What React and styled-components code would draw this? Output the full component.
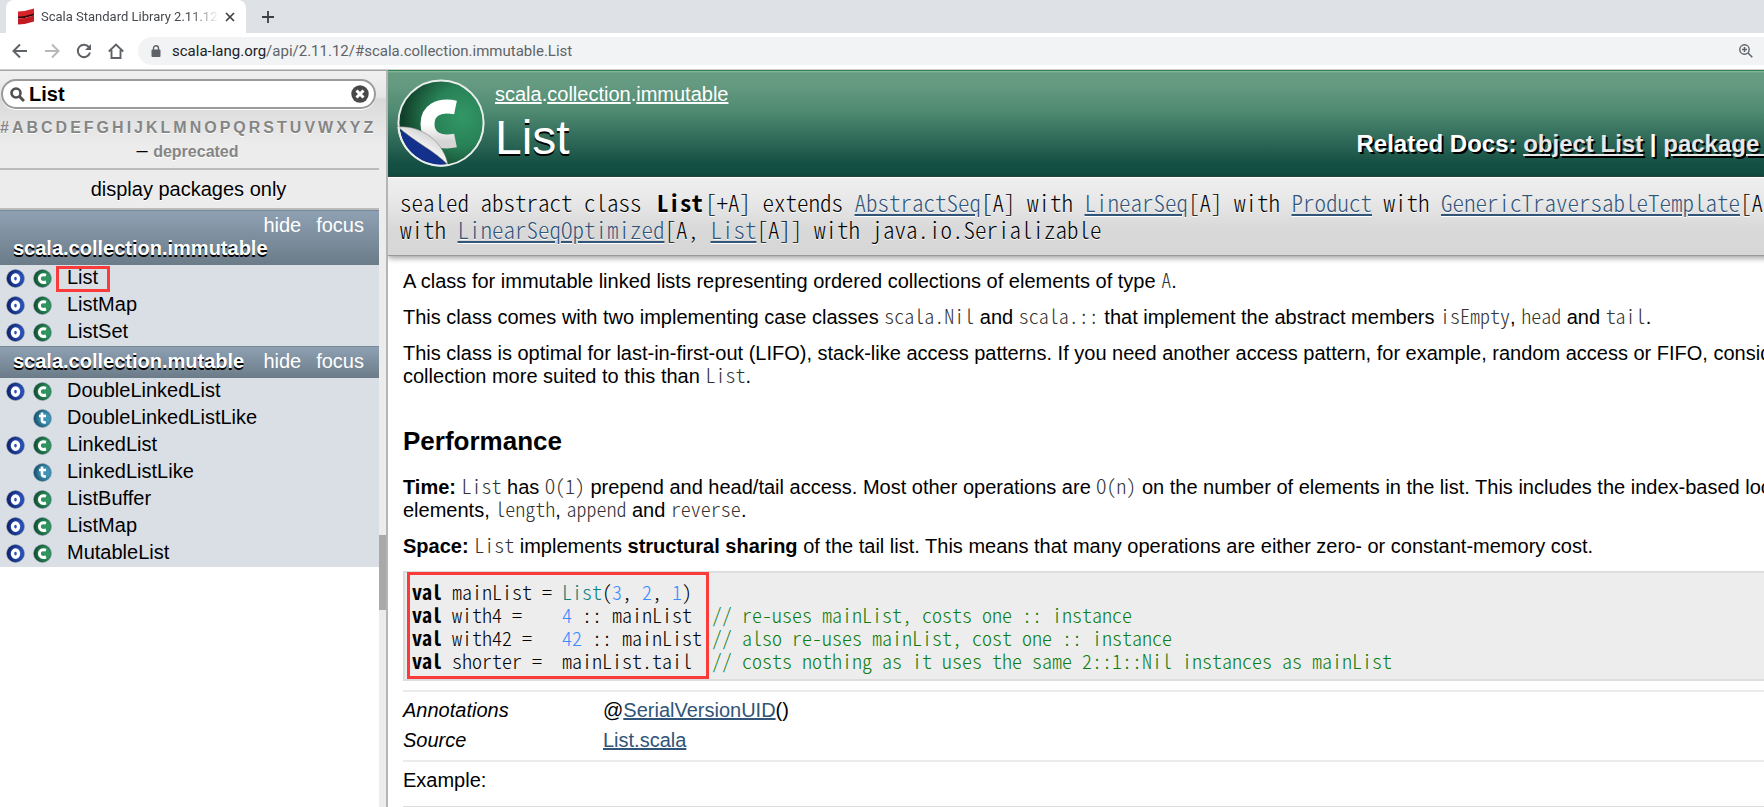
import React from 'react'
import styled, { createGlobalStyle } from 'styled-components'

const GlobalStyle = createGlobalStyle`
    *{
        box-sizing: border-box;
    }
    body{
        margin: 0;
        background-color: #ffffff;
        color: #000000;
        font-family: "Liberation Sans", Arial, sans-serif;
        font-size: 20px;
        overflow: hidden;
    }
    a{
        color: inherit;
    }
    button{
        border: 0;
        padding: 0;
        background: none;
        font: inherit;
        color: inherit;
    }
`

const mono = '"Noto Sans CJK SC", "Liberation Mono", monospace'

/* browser */
const Page = styled.div`
    display: flex;
    flex-direction: column;
    height: 100vh;
    overflow: hidden;
`
const TabBar = styled.div`
    display: flex;
    align-items: flex-end;
    height: 33px;
    background-color: #dee1e6;
`
const Tab = styled.div`
    display: flex;
    align-items: center;
    width: 240px;
    height: 33px;
    margin-left: 6px;
    padding: 0 11px;
    border-radius: 8px 8px 0 0;
    background-color: #ffffff;
`
const TabTitle = styled.span`
    flex: 1;
    margin: 0 6px;
    white-space: nowrap;
    font-family: Roboto, sans-serif;
    font-size: 13px;
    color: #45494d;
    mask-image: linear-gradient(to right, #000 84%, transparent);
`
const TabButton = styled.button`
    display: flex;
    align-items: center;
    height: 33px;
    color: #3c4043;
`
const NewTab = styled(TabButton)`
    margin-left: 15px;
`
const Toolbar = styled.div`
    display: flex;
    align-items: center;
    height: 37px;
    padding-left: 12px;
    border-bottom: 1px solid #cfcfcf;
    color: #5f6368;
`
const NavButton = styled.button`
    display: flex;
    width: 32px;
    opacity: ${props => props.$off ? 0.45 : 1};
`
const Address = styled.div`
    display: flex;
    flex: 1;
    align-items: center;
    height: 28px;
    margin-left: -2px;
    padding: 0 11px 0 13px;
    border-radius: 14px 0 0 14px;
    background-color: #f1f3f4;
`
const Url = styled.span`
    flex: 1;
    margin-left: 11px;
    font-family: Roboto, sans-serif;
    font-size: 15px;
    color: #5f6368;
    b{
        font-weight: 400;
        color: #202124;
    }
`

/* frames */
const Frames = styled.div`
    display: flex;
    flex: 1;
    min-height: 0;
`
const Sidebar = styled.div`
    display: flex;
    flex: none;
    width: 388px;
    border-right: 2px solid #b5b5b5;
    border-top: 1px solid #a3a3a3;
    background: #ffffff;
`
const SideContent = styled.div`
    flex: 1;
`
const ScrollTrack = styled.div`
    width: 7px;
    padding-top: 464px;
    background: linear-gradient(#f0f0f0, #e6e6e6 26px, #d9d9d9 28px, #ececec 74px);
`
const ScrollThumb = styled.div`
    height: 75px;
    background-color: #a9a9a9;
`
const Filter = styled.div`
    height: 99px;
    padding-top: 8px;
    border-bottom: 2px solid #bbbbbb;
    background: linear-gradient(#f0f0f0, #e6e6e6 26px, #d9d9d9 28px, #ececec 74px);
`
const SearchBox = styled.label`
    display: flex;
    align-items: center;
    height: 30px;
    margin: 0 3px 0 1px;
    padding: 0 5px 0 7px;
    border: 2px solid #9a9a9a;
    border-radius: 15px;
    background-color: #ffffff;
    box-shadow: 0 1px 0 #ffffff;
    input{
        flex: 1;
        min-width: 0;
        margin-left: 4px;
        padding: 0;
        border: 0;
        outline: 0;
        background: none;
        font: bold 20px "Liberation Sans", Arial, sans-serif;
    }
    button{
        display: flex;
    }
`
const Letters = styled.div`
    display: flex;
    gap: 3px;
    margin-top: 7px;
    line-height: 23px;
    font-size: 16px;
    font-weight: bold;
    color: #858585;
    text-shadow: 0 1px 0 #ffffff;
    a{
        text-decoration: none;
    }
`
const Deprecated = styled.div`
    padding-right: 4px;
    text-align: center;
    line-height: 22px;
    a{
        font-size: 16px;
        font-weight: bold;
        color: #858585;
        text-decoration: none;
        text-shadow: 0 1px 0 #ffffff;
    }
`
const PackagesOnly = styled.button`
    display: block;
    width: 100%;
    height: 40px;
    padding-right: 2px;
    border-bottom: 2px solid #bbbbbb;
    background-color: #ececec;
    text-align: center;
    text-shadow: 0 1px 0 #ffffff;
`
const PackageHead = styled.div`
    display: flex;
    flex-wrap: wrap;
    justify-content: space-between;
    padding: 3px 15px 5px 13px;
    border-top: 1px solid #76899a;
    background: linear-gradient(#8ea1b3, #6b7b88);
    color: #ffffff;
    line-height: 23px;
    h3{
        flex: ${props => props.$long ? '1 0 100%' : 'none'};
        order: ${props => props.$long ? 1 : 0};
        margin: 0;
        font-size: 20px;
        text-shadow: 0 2px 0 #000000;
    }
`
const PackageActions = styled.div`
    display: flex;
    gap: 15px;
    margin-left: auto;
`
const Entities = styled.ul`
    margin: 0;
    padding: 0;
    list-style: none;
    background-color: #dadfe6;
`
const Entity = styled.li`
    position: relative;
    display: flex;
    height: 27px;
    padding: 0 6px;
    a{
        margin-left: 14px;
        line-height: 24px;
        text-decoration: none;
    }
`
const IconCell = styled.span`
    display: flex;
    align-items: center;
    width: ${props => props.$last ? 20 : 27}px;
`
const Mark = styled.span`
    position: absolute;
    top: ${props => props.$top}px;
    left: ${props => props.$left}px;
    width: ${props => props.$width}px;
    height: ${props => props.$height}px;
    border: 3px solid #fb3a3a;
    pointer-events: none;
`

/* the document is wider than its frame */
const Frame = styled.div`
    flex: 1;
    min-width: 0;
    overflow: hidden;
`
const Doc = styled.div`
    width: calc(100% + 133px);
    white-space: nowrap;
`
const Definition = styled.header`
    display: flex;
    height: 107px;
    padding: 8px 11px 0 9px;
    border-top: 1px solid #2f8552;
    border-bottom: 1px solid #2b4d3f;
    background: linear-gradient(#8fbaa0, #689c82 2px, #649a80 14px, #4f8a72 40px, #155044 92px, #124c40);
    color: #ffffff;
`
const Titles = styled.div`
    margin-left: 10px;
    h1{
        margin: 8px 0 0;
        line-height: 48px;
        font-size: 48px;
        font-weight: normal;
        text-shadow: 0 2px 0 #000000;
    }
`
const Owner = styled.p`
    margin: 4px 0 0;
    line-height: 23px;
`
const Related = styled.div`
    margin: 51px 0 0 auto;
    line-height: 28px;
    font-size: 24px;
    font-weight: bold;
    text-shadow: 2px 2px 0 #000000;
    a{
        color: #e8e8e8;
    }
`
const Signature = styled.div`
    height: 79px;
    padding: 11px 12px;
    border-top: 1px solid #ffffff;
    border-bottom: 1px solid #999999;
    background: linear-gradient(#eeeeee 0, #e9e9e9 20px, #d9d9d9 50px, #d6d6d6);
    box-shadow: 0 2px 6px rgba(0,0,0,0.4);
    font-family: ${mono};
    font-feature-settings: "hwid";
    font-size: 23px;
    font-weight: 300;
    line-height: 27px;
    white-space: pre;
    text-shadow: 0 1px 0 #ffffff;
    a{
        color: #315479;
    }
    b{
        margin: 0 2px 0 4px;
        font-weight: bold;
    }
`
const Comment = styled.div`
    padding: 14px 15px 0;
    line-height: 23px;
    p{
        margin: 0 0 13px;
    }
    h2{
        margin: 39px 0 21px;
        line-height: 28px;
        font-size: 26px;
    }
`
const Code = styled.code`
    font-family: ${mono};
    font-feature-settings: "hwid";
    font-size: 20px;
    font-weight: 300;
    line-height: 20px;
    color: #333333;
`
const CodeBlock = styled.pre`
    position: relative;
    margin: 0;
    padding: 7px;
    border: 2px solid #dddddd;
    background-color: #ededed;
    font-family: ${mono};
    font-feature-settings: "hwid";
    font-size: 20px;
    font-weight: 300;
    line-height: 23px;
    b{
        font-weight: bold;
    }
`
const Token = styled.span`
    color: ${props => props.$color};
`
const Attributes = styled.dl`
    display: grid;
    grid-template-columns: 200px 1fr;
    margin: 9px 0 0;
    padding: 3px 0 5px;
    border-top: 2px solid #ebebeb;
    border-bottom: 2px solid #ebebeb;
    line-height: 30px;
    dt{
        font-style: italic;
    }
    dd{
        margin: 0;
    }
    a{
        color: #315479;
    }
`
const Example = styled.div`
    padding: 6px 0 14px;
    line-height: 24px;
    border-bottom: 2px solid #dddddd;
`

const alphabet = '#ABCDEFGHIJKLMNOPQRSTUVWXYZ'.split('')

const packages = [
    {
        name: 'scala.collection.immutable',
        long: true,
        entities: [['o', 'c', 'List'], ['o', 'c', 'ListMap'], ['o', 'c', 'ListSet']],
    },
    {
        name: 'scala.collection.mutable',
        entities: [
            ['o', 'c', 'DoubleLinkedList'],
            ['', 't', 'DoubleLinkedListLike'],
            ['o', 'c', 'LinkedList'],
            ['', 't', 'LinkedListLike'],
            ['o', 'c', 'ListBuffer'],
            ['o', 'c', 'ListMap'],
            ['o', 'c', 'MutableList'],
        ],
    },
]

const kinds = {
    o: ['#2a50b8', '#0d1f66'],
    c: ['#2f9460', '#0f4a2b'],
    t: ['#3f93b5', '#17506a'],
}

function KindIcon({ kind }) {
    const [light, dark] = kinds[kind]
    return (
        <svg width="19" height="19" viewBox="0 0 19 19" aria-hidden="true">
            <defs>
                <radialGradient id={'kind-' + kind} cx="0.65" cy="0.5" r="0.6">
                    <stop offset="0.4" stopColor={light} />
                    <stop offset="1" stopColor={dark} />
                </radialGradient>
            </defs>
            <circle cx="9.5" cy="9.5" r="9" fill={`url(#kind-${kind})`} stroke="#8c9db0" strokeWidth="0.6" />
            {kind === 'o' && <ellipse cx="9.5" cy="9.6" rx="3" ry="3.6" fill="none" stroke="#fff" strokeWidth="3.4" />}
            {kind === 'c' && <path d="M13 6.1C9 4.8 6.4 6.5 6.4 9.6C6.4 12.8 9 14.2 13 13" fill="none" stroke="#fff" strokeWidth="3" />}
            {kind === 't' && <path d="M9 3.5V11.5Q9 14 12.8 13.2M6 7H13" fill="none" stroke="#fff" strokeWidth="2.6" />}
        </svg>
    )
}

function ClassIcon() {
    return (
        <svg width="88" height="88" viewBox="0 0 88 88" aria-hidden="true">
            <defs>
                <radialGradient id="disc" cx="0.75" cy="0.42" r="0.7">
                    <stop offset="0" stopColor="#329765" />
                    <stop offset="0.5" stopColor="#288257" />
                    <stop offset="1" stopColor="#11402a" />
                </radialGradient>
                <linearGradient id="curl" x1="0.2" y1="0.9" x2="0.7" y2="0.2">
                    <stop offset="0.2" stopColor="#a9a9a9" />
                    <stop offset="0.55" stopColor="#f4f4f4" />
                    <stop offset="1" stopColor="#cfcfcf" />
                </linearGradient>
                <linearGradient id="letter" x1="0" y1="0" x2="0" y2="1">
                    <stop offset="0.5" stopColor="#ffffff" />
                    <stop offset="1" stopColor="#d5d5d5" />
                </linearGradient>
            </defs>
            <circle cx="44" cy="44" r="42.6" fill="url(#disc)" stroke="#e9eeeb" strokeWidth="2" />
            <path d="M58.500 28.500C41 25 30.500 32 30.500 45C30.500 58 41 65 58.500 61.500" fill="none" stroke="url(#letter)" strokeWidth="14" />
            <path d="M3 50C14 60 36 70 50 86A42 42 0 0 1 3 50Z" fill="#12308c" />
            <path d="M1 48C26 46 47 64 51 86C38 72 18 63 1 48Z" fill="url(#curl)" stroke="#777" strokeWidth="0.5" />
            <path d="M1.400 48A42.600 42.600 0 0 0 51 86" fill="none" stroke="#e9eeeb" strokeWidth="2" />
        </svg>
    )
}

function Browser() {
    return (
        <>
            <TabBar>
                <Tab>
                    <svg width="18" height="18" viewBox="0 0 18 18" aria-hidden="true">
                        <path d="M1 3.500Q10 3 17 0.500V6Q10 9 1 9Z" fill="#d9232b" />
                        <path d="M1 8.500Q10 8 17 5.500V7.500Q10 10 1 10.500Z" fill="#3a0a0c" />
                        <path d="M1 10.500Q10 10 17 7.500V13.500Q10 16 1 16.500Z" fill="#c41a22" />
                    </svg>
                    <TabTitle>Scala Standard Library 2.11.12</TabTitle>
                    <TabButton aria-label="Close tab">
                        <svg width="10" height="10" viewBox="0 0 10 10"><path d="M1 1L9 9M9 1L1 9" stroke="currentColor" strokeWidth="1.700" /></svg>
                    </TabButton>
                </Tab>
                <NewTab aria-label="New tab">
                    <svg width="14" height="14" viewBox="0 0 14 14"><path d="M7 1V13M1 7H13" stroke="currentColor" strokeWidth="1.800" /></svg>
                </NewTab>
            </TabBar>
            <Toolbar>
                <NavButton aria-label="Back">
                    <svg width="16" height="16" viewBox="0 0 16 16"><path d="M15 8H2M8 1.500L1.500 8L8 14.500" fill="none" stroke="currentColor" strokeWidth="2" /></svg>
                </NavButton>
                <NavButton aria-label="Forward" $off>
                    <svg width="16" height="16" viewBox="0 0 16 16"><path d="M1 8H14M8 1.500L14.500 8L8 14.500" fill="none" stroke="currentColor" strokeWidth="2" /></svg>
                </NavButton>
                <NavButton aria-label="Reload">
                    <svg width="16" height="16" viewBox="0 0 16 16">
                        <path d="M13.200 4.500A6.200 6.200 0 1 0 14 9.500" fill="none" stroke="currentColor" strokeWidth="2" />
                        <path d="M15 1V7H9Z" fill="currentColor" />
                    </svg>
                </NavButton>
                <NavButton aria-label="Home">
                    <svg width="16" height="16" viewBox="0 0 16 16"><path d="M0.800 8.500L8 1.500L15.200 8.500M3.500 7V15H12.500V7" fill="none" stroke="currentColor" strokeWidth="1.900" /></svg>
                </NavButton>
                <Address>
                    <svg width="10" height="12" viewBox="0 0 10 12" aria-hidden="true">
                        <rect x="0.500" y="4.500" width="9" height="7.500" rx="1" fill="currentColor" />
                        <path d="M2.500 5V3.200A2.500 2.500 0 0 1 7.500 3.200V5" fill="none" stroke="currentColor" strokeWidth="1.400" />
                    </svg>
                    <Url><b>scala-lang.org</b>/api/2.11.12/#scala.collection.immutable.List</Url>
                    <svg width="14" height="14" viewBox="0 0 14 14" aria-hidden="true">
                        <circle cx="5.500" cy="5.500" r="4.700" fill="none" stroke="currentColor" strokeWidth="1.400" />
                        <path d="M5.500 3V8M3 5.500H8M9 9L13.300 13.300" stroke="currentColor" strokeWidth="1.500" />
                    </svg>
                </Address>
            </Toolbar>
        </>
    )
}

function Index() {
    return (
        <Sidebar>
            <SideContent>
                <Filter>
                    <SearchBox>
                        <svg width="15" height="15" viewBox="0 0 15 15" aria-hidden="true">
                            <circle cx="6" cy="6" r="4.500" fill="none" stroke="#505050" strokeWidth="2.600" />
                            <path d="M9.500 9.500L14 14" stroke="#505050" strokeWidth="3" />
                        </svg>
                        <input type="text" defaultValue="List" aria-label="Search" />
                        <button type="button" aria-label="Clear">
                            <svg width="18" height="18" viewBox="0 0 18 18">
                                <circle cx="9" cy="9" r="8.700" fill="#484848" />
                                <path d="M5.500 5.500L12.500 12.500M12.500 5.500L5.500 12.500" stroke="#fff" strokeWidth="3" />
                            </svg>
                        </button>
                    </SearchBox>
                    <Letters>
                        {alphabet.map(letter => <a href="#" key={letter}>{letter}</a>)}
                    </Letters>
                    <Deprecated>– <a href="#">deprecated</a></Deprecated>
                </Filter>
                <PackagesOnly>display packages only</PackagesOnly>
                {packages.map(pack => (
                    <section key={pack.name}>
                        <PackageHead $long={pack.long}>
                            <h3>{pack.name}</h3>
                            <PackageActions>
                                <button>hide</button>
                                <button>focus</button>
                            </PackageActions>
                        </PackageHead>
                        <Entities>
                            {pack.entities.map(([first, second, name]) => (
                                <Entity key={name}>
                                    <IconCell>{first && <KindIcon kind={first} />}</IconCell>
                                    <IconCell $last><KindIcon kind={second} /></IconCell>
                                    <a href="#">{name}</a>
                                    {name === 'List' && <Mark $top={1} $left={56} $width={54} $height={26} />}
                                </Entity>
                            ))}
                        </Entities>
                    </section>
                ))}
            </SideContent>
            <ScrollTrack>
                <ScrollThumb />
            </ScrollTrack>
        </Sidebar>
    )
}

function Snippet() {
    const note = '#0f7d12'
    const num = '#3d8bff'
    return (
        <CodeBlock>
            <b>val</b> mainList = <Token $color="#0b8079">List</Token>(<Token $color={num}>3</Token>, <Token $color={num}>2</Token>, <Token $color={num}>1</Token>){'\n'}
            <b>val</b> with4 =    <Token $color={num}>4</Token> :: mainList  <Token $color={note}>// re-uses mainList, costs one :: instance</Token>{'\n'}
            <b>val</b> with42 =   <Token $color={num}>42</Token> :: mainList <Token $color={note}>// also re-uses mainList, cost one :: instance</Token>{'\n'}
            <b>val</b> shorter =  mainList.tail  <Token $color={note}>// costs nothing as it uses the same 2::1::Nil instances as mainList</Token>
            <Mark $top={-1} $left={2} $width={302} $height={107} />
        </CodeBlock>
    )
}

function Main() {
    return (
        <Frame>
            <Doc>
                <Definition>
                    <ClassIcon />
                    <Titles>
                        <Owner><a href="#">scala</a>.<a href="#">collection</a>.<a href="#">immutable</a></Owner>
                        <h1>List</h1>
                    </Titles>
                    <Related>Related Docs: <a href="#">object List</a> | <a href="#">package immutable</a></Related>
                </Definition>
                <Signature>
                    sealed abstract class <b>List</b>[+A] extends <a href="#">AbstractSeq</a>[A] with <a href="#">LinearSeq</a>[A] with <a href="#">Product</a> with <a href="#">GenericTraversableTemplate</a>[A, <a href="#">List</a>]
                    <br />
                    with <a href="#">LinearSeqOptimized</a>[A, <a href="#">List</a>[A]] with java.io.Serializable
                </Signature>
                <Comment>
                    <p>A class for immutable linked lists representing ordered collections of elements of type <Code>A</Code>.</p>
                    <p>This class comes with two implementing case classes <Code>scala.Nil</Code> and <Code>scala.::</Code> that implement the abstract members <Code>isEmpty</Code>, <Code>head</Code> and <Code>tail</Code>.</p>
                    <p>
                        This class is optimal for last-in-first-out (LIFO), stack-like access patterns. If you need another access pattern, for example, random access or FIFO, consider using a<br />
                        collection more suited to this than <Code>List</Code>.
                    </p>
                    <h2>Performance</h2>
                    <p>
                        <b>Time:</b> <Code>List</Code> has <Code>O(1)</Code> prepend and head/tail access. Most other operations are <Code>O(n)</Code> on the number of elements in the list. This includes the index-based lookup of<br />
                        elements, <Code>length</Code>, <Code>append</Code> and <Code>reverse</Code>.
                    </p>
                    <p><b>Space:</b> <Code>List</Code> implements <b>structural sharing</b> of the tail list. This means that many operations are either zero- or constant-memory cost.</p>
                    <Snippet />
                    <Attributes>
                        <dt>Annotations</dt>
                        <dd>@<a href="#">SerialVersionUID</a>()</dd>
                        <dt>Source</dt>
                        <dd><a href="#">List.scala</a></dd>
                    </Attributes>
                    <Example>Example:</Example>
                </Comment>
            </Doc>
        </Frame>
    )
}

function App() {
    return (
        <Page>
            <GlobalStyle />
            <Browser />
            <Frames>
                <Index />
                <Main />
            </Frames>
        </Page>
    )
}

export default App
